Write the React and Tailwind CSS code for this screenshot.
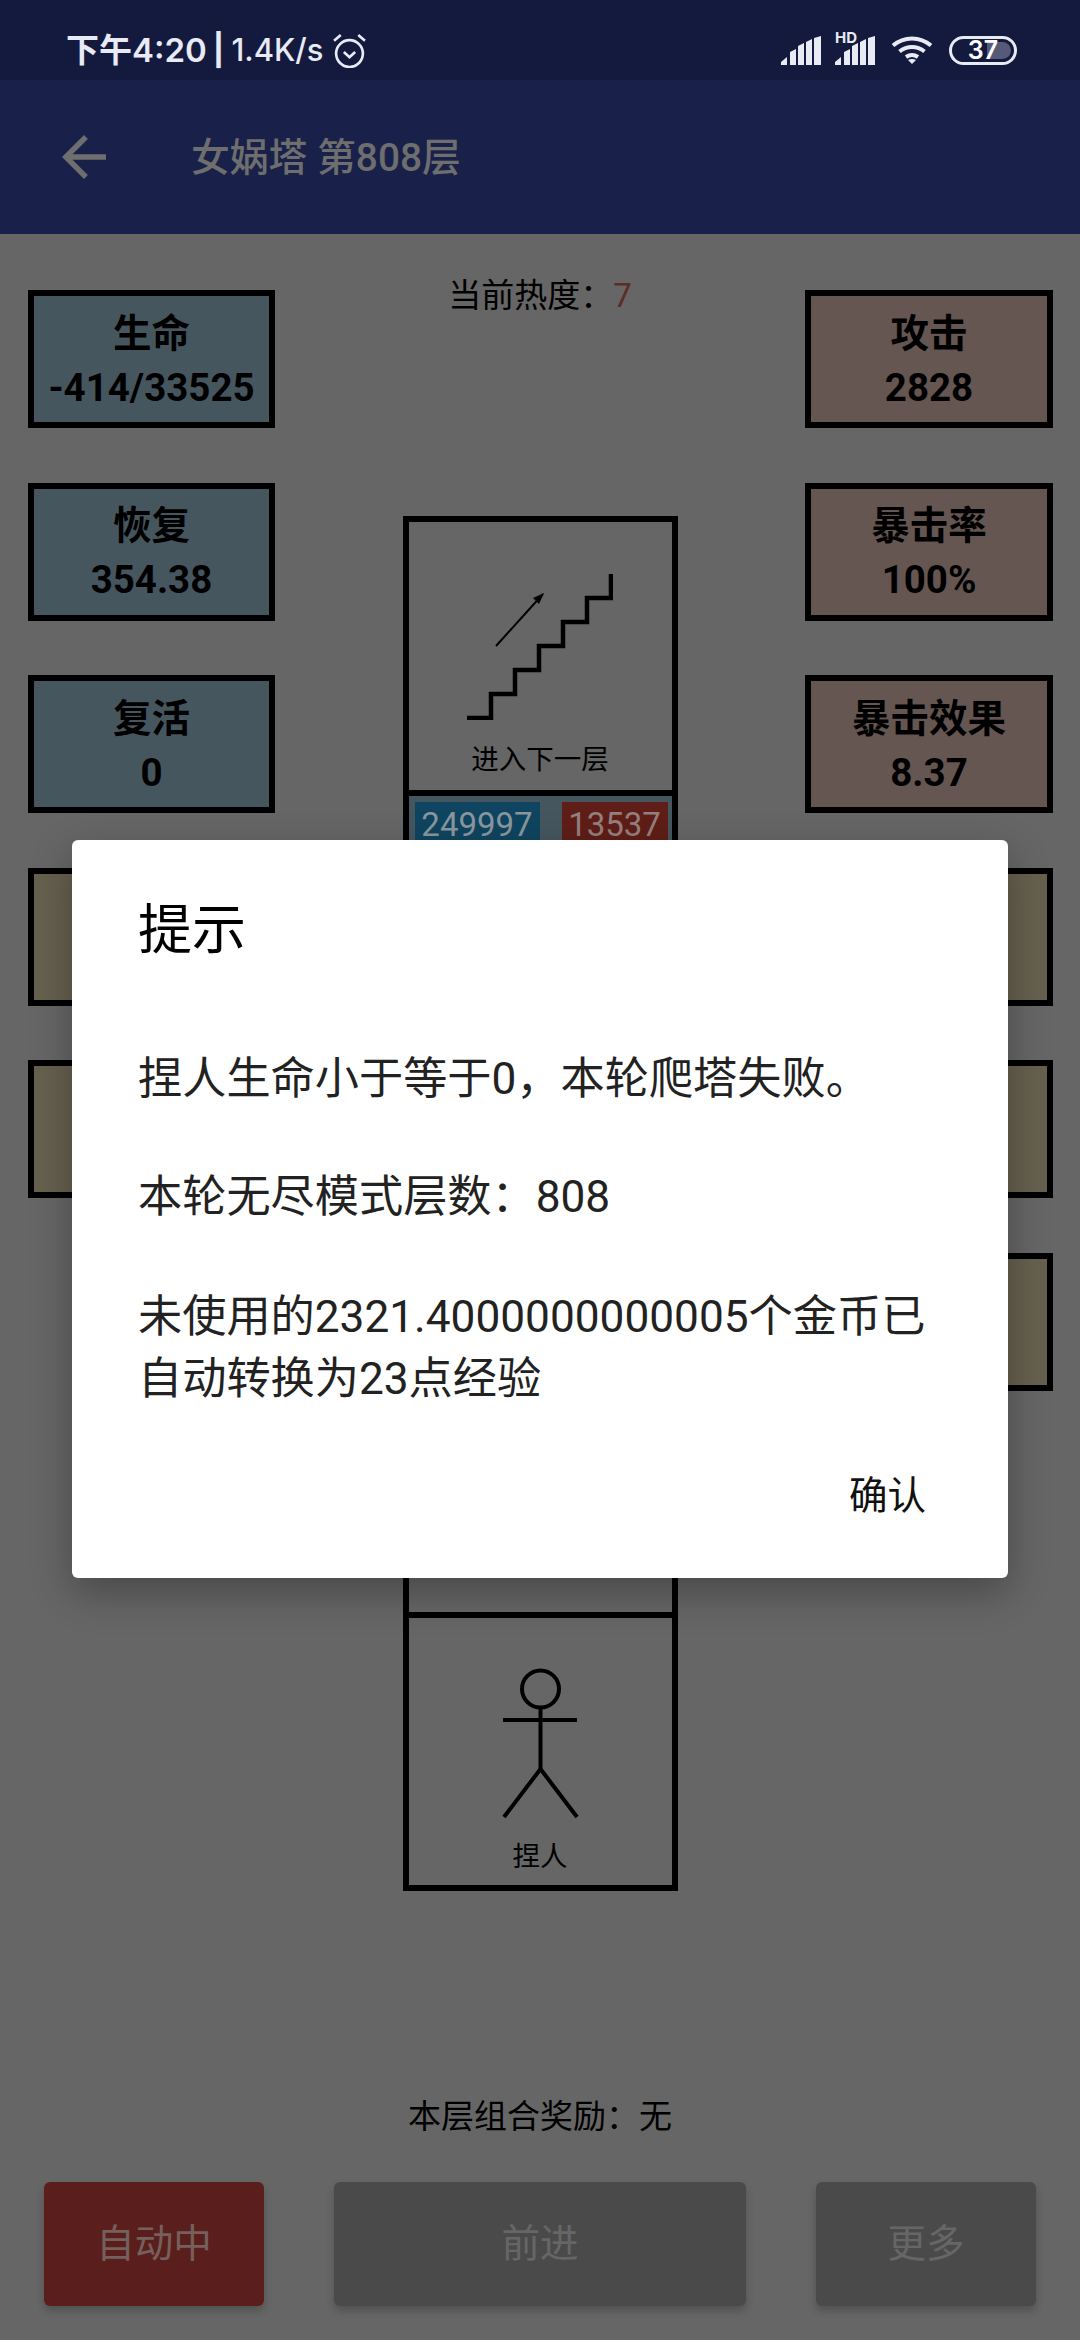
import React from 'react';

const cjk = "font-['Roboto','Noto_Sans_CJK_SC',sans-serif]";

const leftStats = [
  { label: '生命', value: '-414/33525', bg: 'bg-[#46565f]' },
  { label: '恢复', value: '354.38', bg: 'bg-[#46565f]' },
  { label: '复活', value: '0', bg: 'bg-[#46565f]' },
  { bg: 'bg-[#66604f]' },
  { bg: 'bg-[#66604f]' },
];

const rightStats = [
  { label: '攻击', value: '2828', bg: 'bg-[#655652]' },
  { label: '暴击率', value: '100%', bg: 'bg-[#655652]' },
  { label: '暴击效果', value: '8.37', bg: 'bg-[#655652]' },
  { bg: 'bg-[#66604f]' },
  { bg: 'bg-[#66604f]' },
  { bg: 'bg-[#66604f]' },
];

const StatCard = ({ label, value, bg }) => (
  <div className={`flex h-[138px] flex-col items-center justify-center border-[6px] border-black pt-[3px] text-[38.5px] font-bold leading-[54px] text-black ${bg}`}>
    <span>{label}</span>
    <span>{value}</span>
  </div>
);

const SignalIcon = () => (
  <svg width="40" height="29" viewBox="0 0 40 29" fill="#e8eaf4">
    <path d="M0 29v-3l6-5v8zM9 29V16l6-3v16zM17 29V10l6-3v22zM25 29V6l6-3v26zM33 29V2l7-2v29z" />
  </svg>
);

const WifiIcon = () => (
  <svg width="42" height="28" viewBox="0 0 42 28" fill="none" stroke="#e8eaf4" strokeWidth="4">
    <path d="M2 9.5C13 0 29 0 40 9.5" />
    <path d="M8.5 15.5C16 9.5 26 9.5 33.5 15.5" />
    <path d="M15 21c3.6-2.5 8.4-2.5 12 0" />
    <path d="M21 28l-4-4c2.5-1.5 5.5-1.5 8 0z" fill="#e8eaf4" stroke="none" />
  </svg>
);

const AlarmIcon = () => (
  <svg width="35" height="35" viewBox="0 0 34 34" fill="none" stroke="#e8eaf4" strokeWidth="2.6">
    <circle cx="17" cy="20" r="13" />
    <path d="M11.5 18.5l5.5 5 5.5-5" />
    <path d="M2 7.5L8.5 2M32 7.5L25.5 2" />
  </svg>
);

const StairsIcon = () => (
  <svg width="146" height="146" viewBox="0 0 146 146" fill="none" stroke="#000">
    <path d="M0 144H24V120H48V96H72V72H96V48H120V24H144V0" strokeWidth="4.5" />
    <path d="M29 72L76 20" strokeWidth="2" />
    <path d="M77 19l-11 5 6 6z" fill="#000" stroke="none" />
  </svg>
);

const PersonIcon = () => (
  <svg width="80" height="156" viewBox="0 0 80 156" fill="none" stroke="#000" strokeWidth="4">
    <circle cx="40.5" cy="21" r="18.5" />
    <path d="M3 52H77M40.5 39V101M40.5 101L4 149M40.5 101L77 149" />
  </svg>
);

const App = () => {
  return (
    <div className={`flex h-[2340px] w-[1080px] flex-col overflow-hidden bg-[#666666] ${cjk}`}>
      {/* status bar */}
      <div className="flex h-[80px] items-center justify-between bg-[#141a3e] pl-[66px] pr-[63px] pt-[20px] font-['Inter','Noto_Sans_CJK_SC',sans-serif] font-medium text-[#e8eaf4]">
        <div className="flex items-center">
          <span className="text-[33px] font-semibold leading-[40px]">下午4:20</span>
          <span className="ml-[6px] text-[31px] font-bold leading-[40px]">|</span>
          <span className="ml-[7px] text-[31px] leading-[40px]">1.4K/s</span>
          <span className="ml-[9px]"><AlarmIcon /></span>
        </div>
        <div className="flex items-center">
          <SignalIcon />
          <div className="relative ml-[14px]">
            <span className="absolute left-0 top-[-6px] text-[15px] font-bold leading-[15px]">HD</span>
            <SignalIcon />
          </div>
          <span className="ml-[16px]"><WifiIcon /></span>
          <div className="relative ml-[16px] flex h-[29px] w-[68px] items-center justify-center overflow-hidden rounded-full border-[3px] border-[#e8eaf4]">
            <div className="absolute bottom-[3px] right-[3px] top-[3px] w-[24px] rounded-r-full bg-[#565a78]" />
            <span className="relative text-[25px] font-semibold leading-none text-white">37</span>
          </div>
        </div>
      </div>

      {/* app bar */}
      <div className="flex h-[154px] items-center bg-[#19214a] pl-[51px]">
        <svg width="66" height="66" viewBox="0 0 24 24" fill="#6e6e6e">
          <path d="M20 11H7.83l5.59-5.59L12 4l-8 8 8 8 1.41-1.41L7.83 13H20v-2z" />
        </svg>
        <span className="ml-[74px] pt-[2px] text-[38.8px] font-medium leading-none text-[#6e6e6e]">女娲塔 第808层</span>
      </div>

      {/* body */}
      <div className="relative flex flex-1 flex-col">
        <div className="flex justify-between pl-[28px] pr-[27px] pt-[56px]">
          <div className="flex w-[247px] flex-col gap-[54.6px]">
            {leftStats.map((stat, i) => <StatCard key={i} {...stat} />)}
          </div>

          <div className="flex w-[275px] flex-col items-center">
            <p className="mt-[-15px] h-[241px] text-[33px] leading-[42px] text-black">
              当前热度：<span className="text-[#5c2c28]">7</span>
            </p>
            <div className="flex w-full flex-col border-[6px] border-black">
              <div className="flex h-[268px] flex-col items-center">
                <div className="mt-[52px]"><StairsIcon /></div>
                <span className="mt-[22px] text-[27.5px] leading-[36px] text-black">进入下一层</span>
              </div>
              <div className="h-[822px] border-t-[6px] border-black">
                <div className="flex h-[60px] justify-between bg-[#46565f] pl-[6px] pr-[4px] pt-[6px]">
                  <span className="h-[54px] w-[125px] bg-[#0f4560] text-center text-[33px] leading-[46px] text-[#8a979e]">249997</span>
                  <span className="h-[54px] w-[106px] bg-[#5f1e17] text-center text-[33px] leading-[46px] text-[#94807e]">13537</span>
                </div>
              </div>
              <div className="flex h-[273px] flex-col items-center border-t-[6px] border-black pt-[50px]">
                <PersonIcon />
                <span className="mt-[15px] text-[27.5px] leading-[36px] text-black">捏人</span>
              </div>
            </div>
          </div>

          <div className="flex w-[248px] flex-col gap-[54.6px]">
            {rightStats.map((stat, i) => <StatCard key={i} {...stat} />)}
          </div>
        </div>

        <div className="mt-auto flex flex-col">
          <p className="text-center text-[33px] leading-[42px] text-black">本层组合奖励：无</p>
          <div className="mt-[44px] flex gap-[70px] pb-[34px] pl-[44px]">
            <button className="h-[124px] w-[220px] rounded-[6px] bg-[#5a1f1c] text-[38.5px] text-[#75605e] shadow-[0_5px_8px_rgba(0,0,0,0.2)]">自动中</button>
            <button className="h-[124px] w-[412px] rounded-[6px] bg-[#4a4a4a] text-[38.5px] text-[#666666] shadow-[0_5px_8px_rgba(0,0,0,0.2)]">前进</button>
            <button className="h-[124px] w-[220px] rounded-[6px] bg-[#4a4a4a] text-[38.5px] text-[#666666] shadow-[0_5px_8px_rgba(0,0,0,0.2)]">更多</button>
          </div>
        </div>

        {/* dialog */}
        <div className="absolute left-[72px] top-[606px] flex h-[738px] w-[936px] flex-col rounded-[6px] bg-white pl-[66px] pr-[82px] shadow-[0_14px_40px_rgba(0,0,0,0.3)]">
          <h2 className="mt-[55px] text-[54px] font-normal leading-[72px] text-black">提示</h2>
          <p className="mt-[82px] text-[44.2px] leading-[60px] text-[#222222]">捏人生命小于等于0，本轮爬塔失败。</p>
          <p className="mt-[58px] text-[44.2px] leading-[60px] text-[#222222]">本轮无尽模式层数：808</p>
          <p className="mt-[59px] whitespace-nowrap text-[44.2px] leading-[62px] text-[#222222]">未使用的2321.4000000000005个金币已<br />自动转换为23点经验</p>
          <span className="mt-[61px] self-end text-[38.5px] leading-[50px] text-[#111111]">确认</span>
        </div>
      </div>
    </div>
  );
};

export default App;
